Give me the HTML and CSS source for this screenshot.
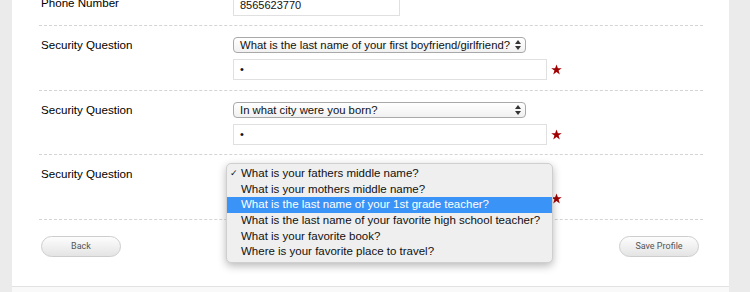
FILE: index.html
```html
<!DOCTYPE html>
<html lang="en">
<head>
    <meta charset="UTF-8">
    <meta name="viewport" content="width=device-width, initial-scale=1.0">
    <title>Edit Profile</title>
    <link rel="stylesheet" href="styles.css">
</head>
<body>
    <div class="panel">
        <div class="form">
            <div class="row">
                <div class="label">Phone Number</div>
                <div class="fields">
                    <div class="input phone">8565623770</div>
                </div>
            </div>

            <div class="row">
                <div class="label">Security Question</div>
                <div class="fields">
                    <div class="select">
                        <span>What is the last name of your first boyfriend/girlfriend?</span>
                        <svg class="arrows" width="6" height="10" viewBox="0 0 6 10"><polygon points="3,0 6,4 0,4" /><polygon points="0,6 6,6 3,10" /></svg>
                    </div>
                    <div class="answer">
                        <div class="input">•</div>
                        <svg class="star" width="11" height="11" viewBox="0 0 24 24"><polygon points="12,1 15,9 23.5,9 16.5,14.2 19.2,22.8 12,17.5 4.8,22.8 7.5,14.2 0.5,9 9,9" /></svg>
                    </div>
                </div>
            </div>

            <div class="row">
                <div class="label">Security Question</div>
                <div class="fields">
                    <div class="select">
                        <span>In what city were you born?</span>
                        <svg class="arrows" width="6" height="10" viewBox="0 0 6 10"><polygon points="3,0 6,4 0,4" /><polygon points="0,6 6,6 3,10" /></svg>
                    </div>
                    <div class="answer">
                        <div class="input">•</div>
                        <svg class="star" width="11" height="11" viewBox="0 0 24 24"><polygon points="12,1 15,9 23.5,9 16.5,14.2 19.2,22.8 12,17.5 4.8,22.8 7.5,14.2 0.5,9 9,9" /></svg>
                    </div>
                </div>
            </div>

            <div class="row">
                <div class="label">Security Question</div>
                <div class="fields open">
                    <div class="select">
                        <span>What is your fathers middle name?</span>
                        <svg class="arrows" width="6" height="10" viewBox="0 0 6 10"><polygon points="3,0 6,4 0,4" /><polygon points="0,6 6,6 3,10" /></svg>
                    </div>
                    <div class="answer">
                        <div class="input">•</div>
                        <svg class="star" width="11" height="11" viewBox="0 0 24 24"><polygon points="12,1 15,9 23.5,9 16.5,14.2 19.2,22.8 12,17.5 4.8,22.8 7.5,14.2 0.5,9 9,9" /></svg>
                    </div>

                    <ul class="menu">
                        <li class="checked">What is your fathers middle name?</li>
                        <li>What is your mothers middle name?</li>
                        <li class="hover">What is the last name of your 1st grade teacher?</li>
                        <li>What is the last name of your favorite high school teacher?</li>
                        <li>What is your favorite book?</li>
                        <li>Where is your favorite place to travel?</li>
                    </ul>
                </div>
            </div>

            <div class="buttons">
                <button class="btn">Back</button>
                <button class="btn">Save Profile</button>
            </div>
        </div>
        <div class="footer"></div>
    </div>
</body>
</html>
```

FILE: styles.css
```css
body {
    margin: 0;
    background-color: #ebebeb;
    font-family: "Liberation Sans", Arial, sans-serif;
    color: #000;
    height: 292px;
    overflow: hidden;
}

.panel {
    margin-left: 12px;
    width: 717px;
    background-color: #fff;
}

.form {
    padding: 0 26px 29px 27px;
    margin-top: -16px;
}

.row {
    display: flex;
    padding: 11px 0 9.4px;
    border-bottom: 1px dashed #d4d4d4;
}

.label {
    width: 192px;
    padding-left: 2px;
    font-size: 11.6px;
    line-height: 16px;
}

.fields {
    display: flex;
    flex-direction: column;
    gap: 6px;
    position: relative;
}

.input {
    box-sizing: border-box;
    width: 314px;
    height: 21px;
    border: 1px solid #e0e0e0;
    padding-left: 6px;
    font-size: 11px;
    line-height: 19px;
    color: #111;
}

.input.phone {
    width: 167px;
}

.answer {
    display: flex;
    align-items: center;
    gap: 4px;
}

.star {
    fill: #a00000;
}

.select {
    box-sizing: border-box;
    width: 293px;
    height: 16px;
    display: flex;
    align-items: center;
    justify-content: space-between;
    padding: 0 4px 0 6px;
    border: 1px solid #a9a9a9;
    border-radius: 4px;
    background: linear-gradient(#ffffff, #f1f1f1);
    font-size: 11.3px;
    color: #111;
    white-space: nowrap;
}

.arrows {
    fill: #333;
}

.menu {
    position: absolute;
    left: -7px;
    top: -3px;
    width: 327px;
    margin: 0;
    padding: 2px 0;
    list-style: none;
    box-sizing: border-box;
    background-color: #efefef;
    border: 1px solid #cfcfcf;
    border-radius: 5px;
    box-shadow: 0 3px 9px rgba(0, 0, 0, 0.28);
    font-size: 11.5px;
    color: #111;
}

.menu li {
    height: 15.6px;
    line-height: 15.6px;
    padding-left: 14px;
    position: relative;
    white-space: nowrap;
}

.menu li.checked::before {
    content: "\2713";
    position: absolute;
    left: 3px;
    font-size: 9px;
}

.menu li.hover {
    background-color: #3a93f6;
    color: #fff;
}

.buttons {
    display: flex;
    justify-content: space-between;
    padding: 16px 4px 0 2px;
}

.btn {
    width: 80px;
    height: 21px;
    border: 1px solid #cdcdcd;
    border-radius: 11px;
    background: linear-gradient(#fdfdfd, #e4e4e4);
    font-family: Roboto, "Liberation Sans", sans-serif;
    font-size: 9px;
    color: #555;
    padding: 0;
}

.footer {
    height: 7px;
    border-top: 1px solid #e2e2e2;
    background-color: #f9f9f9;
}
```
